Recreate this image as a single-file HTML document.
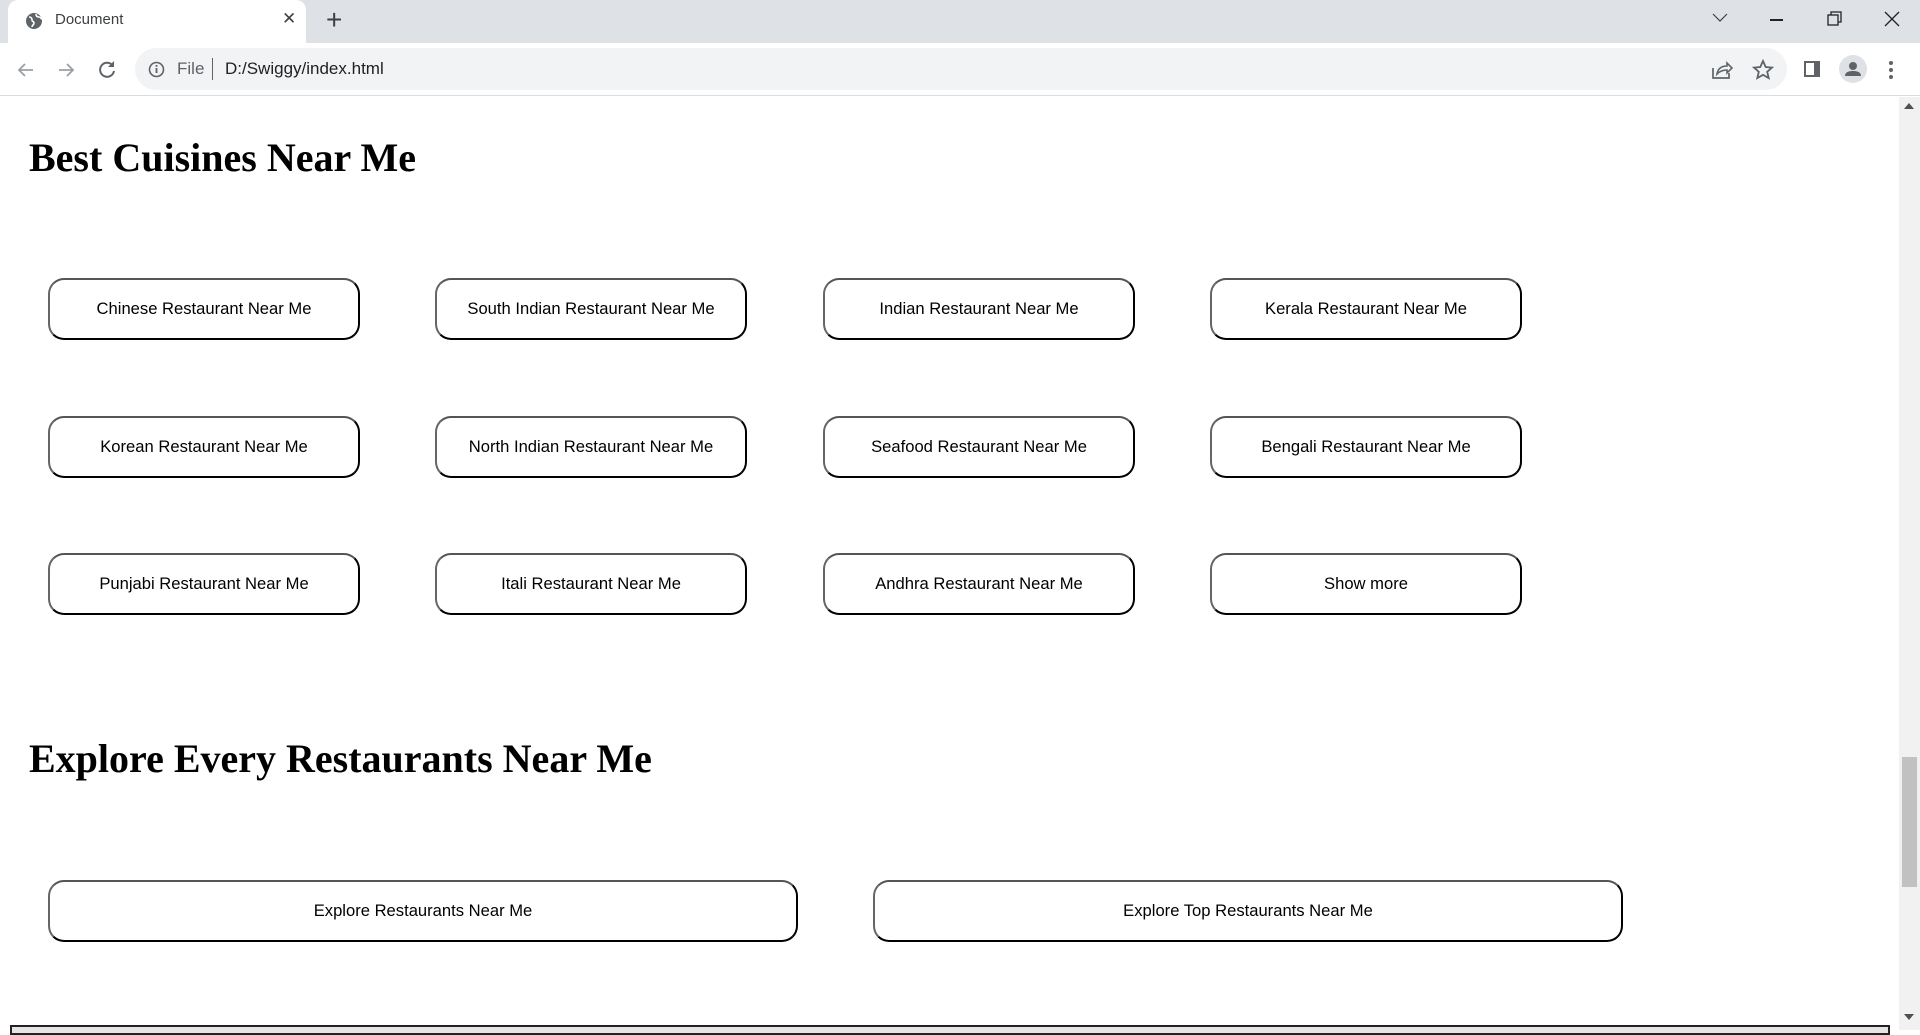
<!DOCTYPE html>
<html><head><meta charset="utf-8"><style>
*{margin:0;padding:0;box-sizing:border-box}
body{width:1920px;height:1030px;overflow:hidden;background:#fff;position:relative;font-family:"Liberation Sans",sans-serif}
.abs{position:absolute}
.btn{position:absolute;width:312px;height:62px;border:2px outset #767676;border-top-color:#555;border-left-color:#666;border-right-color:#111;border-bottom-color:#000;border-radius:16px;background:#fff;font-size:16.6px;color:#000;display:flex;align-items:center;justify-content:center}
.h{position:absolute;left:29px;font-family:"Liberation Serif",serif;font-weight:bold;font-size:40px;color:#000;white-space:nowrap}
</style></head><body>
<div class="abs" style="left:0;top:0;width:1920px;height:43px;background:#dee1e6"></div>
<div class="abs" style="left:8px;top:0;width:298px;height:43px;background:#fff;border-radius:10px 10px 0 0"></div>
<svg class="abs" style="left:25px;top:12px" width="18" height="18" viewBox="0 0 18 18"><circle cx="9" cy="9" r="8" fill="#5f6368"/><path d="M4 5c2 0 3 1 3 3s2 1 2 3-2 2-2 4M11 2c0 2 1 3 3 3s2 2 3 2" stroke="#fff" stroke-width="1.6" fill="none"/></svg>
<div class="abs" style="left:55px;top:11px;font-size:15px;color:#3c4043">Document</div>
<div class="abs" style="left:282px;top:9px;font-size:17px;color:#3c4043">✕</div>
<div class="abs" style="left:326px;top:4px;font-size:28px;color:#3c4043;font-weight:300">+</div>
<svg class="abs" style="left:1712px;top:13px" width="16" height="10"><path d="M1 1l7 7 7-7" stroke="#3c4043" fill="none" stroke-width="1.2"/></svg>
<div class="abs" style="left:1770px;top:19px;width:13px;height:1.5px;background:#222"></div>
<svg class="abs" style="left:1827px;top:11px" width="16" height="16"><rect x="1" y="4" width="10" height="10" fill="none" stroke="#222" stroke-width="1.3"/><path d="M4 4V1h10v10h-3" fill="none" stroke="#222" stroke-width="1.3"/></svg>
<svg class="abs" style="left:1884px;top:11px" width="16" height="16"><path d="M1 1l14 14M15 1L1 15" stroke="#222" stroke-width="1.3"/></svg>
<div class="abs" style="left:0;top:43px;width:1920px;height:53px;background:#fff;border-bottom:1px solid #dadce0"></div>
<svg class="abs" style="left:16px;top:60px" width="20" height="20"><path d="M17 10H3M9 4l-6 6 6 6" stroke="#9aa0a6" stroke-width="1.8" fill="none"/></svg>
<svg class="abs" style="left:56px;top:60px" width="20" height="20"><path d="M3 10h14M11 4l6 6-6 6" stroke="#9aa0a6" stroke-width="1.8" fill="none"/></svg>
<svg class="abs" style="left:96px;top:59px" width="22" height="22"><path d="M17 7A7 7 0 1 0 18 12" stroke="#5f6368" stroke-width="2" fill="none"/><path d="M18 2v6h-6z" fill="#5f6368"/></svg>
<div class="abs" style="left:135px;top:48px;width:1652px;height:42px;background:#f1f3f4;border-radius:21px"></div>
<svg class="abs" style="left:148px;top:61px" width="17" height="17"><circle cx="8.5" cy="8.5" r="7" fill="none" stroke="#5f6368" stroke-width="1.6"/><rect x="7.6" y="7" width="1.8" height="5" fill="#5f6368"/><rect x="7.6" y="4" width="1.8" height="1.8" fill="#5f6368"/></svg>
<div class="abs" style="left:177px;top:59px;font-size:17px;color:#5f6368">File</div>
<div class="abs" style="left:212px;top:58px;width:1px;height:22px;background:#5f6368"></div>
<div class="abs" style="left:225px;top:59px;font-size:17px;color:#202124">D:/Swiggy/index.html</div>
<svg class="abs" style="left:1711px;top:59px" width="22" height="22"><path d="M2 9v10h16v-5" stroke="#5f6368" stroke-width="1.7" fill="none"/><path d="M6 15c1-6 5-8 10-8V4l5 5-5 5v-3c-4 0-7 1-10 4z" stroke="#5f6368" stroke-width="1.6" fill="none"/></svg>
<svg class="abs" style="left:1752px;top:59px" width="22" height="22"><path d="M11 2l2.7 6 6.3.6-4.8 4.2 1.5 6.3L11 15.8 5.3 19.1l1.5-6.3L2 8.6 8.3 8z" stroke="#5f6368" stroke-width="1.8" fill="none"/></svg>
<svg class="abs" style="left:1803px;top:60px" width="18" height="18"><rect x="1" y="1" width="16" height="16" fill="#5f6368"/><rect x="3" y="3" width="8" height="12" fill="#fff"/></svg>
<div class="abs" style="left:1839px;top:55px;width:28px;height:28px;border-radius:50%;background:#dee1e6"></div>
<svg class="abs" style="left:1843px;top:59px" width="20" height="20"><circle cx="10" cy="7" r="4" fill="#5f6368"/><path d="M2 17c0-4 4-5 8-5s8 1 8 5z" fill="#5f6368"/></svg>
<svg class="abs" style="left:1888px;top:60px" width="6" height="20"><circle cx="3" cy="3" r="2" fill="#5f6368"/><circle cx="3" cy="10" r="2" fill="#5f6368"/><circle cx="3" cy="17" r="2" fill="#5f6368"/></svg>
<div class="abs" style="left:1899px;top:97px;width:21px;height:933px;background:#f1f1f1"></div>
<div class="abs" style="left:1902px;top:757px;width:15px;height:130px;background:#c1c1c1"></div>
<svg class="abs" style="left:1904px;top:103px" width="10" height="6"><path d="M0 6L5 0 10 6z" fill="#505050"/></svg>
<svg class="abs" style="left:1904px;top:1014px" width="10" height="6"><path d="M0 0L5 6 10 0z" fill="#505050"/></svg>
<div class="h" style="top:134px">Best Cuisines Near Me</div>
<div class="btn" style="left:48px;top:278px">Chinese Restaurant Near Me</div>
<div class="btn" style="left:435px;top:278px">South Indian Restaurant Near Me</div>
<div class="btn" style="left:823px;top:278px">Indian Restaurant Near Me</div>
<div class="btn" style="left:1210px;top:278px">Kerala Restaurant Near Me</div>
<div class="btn" style="left:48px;top:416px">Korean Restaurant Near Me</div>
<div class="btn" style="left:435px;top:416px">North Indian Restaurant Near Me</div>
<div class="btn" style="left:823px;top:416px">Seafood Restaurant Near Me</div>
<div class="btn" style="left:1210px;top:416px">Bengali Restaurant Near Me</div>
<div class="btn" style="left:48px;top:553px">Punjabi Restaurant Near Me</div>
<div class="btn" style="left:435px;top:553px">Itali Restaurant Near Me</div>
<div class="btn" style="left:823px;top:553px">Andhra Restaurant Near Me</div>
<div class="btn" style="left:1210px;top:553px">Show more</div>
<div class="h" style="top:735px">Explore Every Restaurants Near Me</div>
<div class="btn" style="left:48px;top:880px;width:750px">Explore Restaurants Near Me</div>
<div class="btn" style="left:873px;top:880px;width:750px">Explore Top Restaurants Near Me</div>
<div class="abs" style="left:10px;top:1025px;width:1880px;height:10px;border:2px solid #222;background:#e5e5e5"></div>
</body></html>
